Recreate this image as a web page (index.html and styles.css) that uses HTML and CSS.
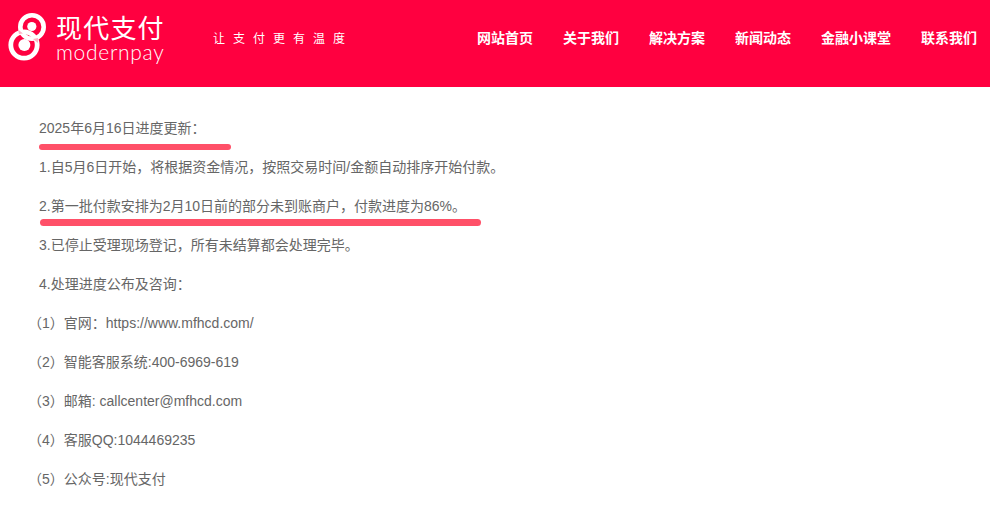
FILE: index.html
```html
<!DOCTYPE html>
<html lang="zh-CN">
<head>
<meta charset="utf-8">
<title>现代支付</title>
<link rel="stylesheet" href="styles.css">
</head>
<body>
<header class="header">
  <a class="logo" href="#">
    <svg class="logo-mark" width="48" height="56" viewBox="0 0 48 56" aria-hidden="true">
      <circle class="ring" cx="32" cy="18" r="11.7" stroke-width="4.6"/>
      <circle class="ring" cx="24" cy="36" r="13.2" stroke-width="4.8"/>
      <circle class="dot" cx="31.8" cy="17.5" r="4.6"/>
      <circle class="dot" cx="24.4" cy="36" r="6"/>
      <path class="ring-shade" d="M18 20.5 L23 24.5 L19 25 Z"/>
      <path class="ring-shade" d="M33 30 L38 29 L38 34 Z"/>
    </svg>
    <span class="logo-text">
      <span class="logo-cn">现代支付</span>
      <span class="logo-en">modernpay</span>
    </span>
  </a>
  <span class="tagline">让支付更有温度</span>
  <nav class="nav">
    <a href="#">网站首页</a>
    <a href="#">关于我们</a>
    <a href="#">解决方案</a>
    <a href="#">新闻动态</a>
    <a href="#">金融小课堂</a>
    <a href="#">联系我们</a>
  </nav>
</header>
<main class="content">
  <p class="line indented">2025年6月16日进度更新：<span class="bar bar-short"></span></p>
  <p class="line indented">1.自5月6日开始，将根据资金情况，按照交易时间/金额自动排序开始付款。</p>
  <p class="line indented">2.第一批付款安排为2月10日前的部分未到账商户，付款进度为86%。<span class="bar bar-long"></span></p>
  <p class="line indented">3.已停止受理现场登记，所有未结算都会处理完毕。</p>
  <p class="line indented">4.处理进度公布及咨询：</p>
  <p class="line">（1）官网：https://www.mfhcd.com/</p>
  <p class="line">（2）智能客服系统:400-6969-619</p>
  <p class="line">（3）邮箱: callcenter@mfhcd.com</p>
  <p class="line">（4）客服QQ:1044469235</p>
  <p class="line">（5）公众号:现代支付</p>
</main>
</body>
</html>
```
FILE: styles.css
```css
* { box-sizing: border-box; }
html, body { margin: 0; padding: 0; }
body {
  background: #fff;
  font-family: "Liberation Sans", "Noto Sans CJK SC", sans-serif;
  font-size: 14px;
  color: #666;
  overflow: hidden;
}
a { color: inherit; text-decoration: none; }

.header {
  display: flex;
  align-items: center;
  height: 87px;
  padding: 0 13px 13px 0;
  background: #ff0040;
  color: #fff;
}
.logo { display: flex; align-items: center; width: 213px; }
.logo-mark { flex: none; }
.ring { fill: none; stroke: #fff; }
.dot { fill: #fff; }
.ring-shade { fill: #ffb3c6; }
.logo-text { display: flex; flex-direction: column; margin: 3px 0 0 8px; }
.logo-cn {
  font-family: "Noto Sans CJK SC", sans-serif;
  font-weight: 400;
  font-size: 26px;
  line-height: 26px;
  letter-spacing: 1.2px;
  white-space: nowrap;
}
.logo-en {
  font-family: "Lato", sans-serif;
  font-weight: 300;
  font-size: 21px;
  line-height: 23px;
  letter-spacing: 0.7px;
  white-space: nowrap;
}
.tagline {
  font-family: "Noto Sans CJK SC", sans-serif;
  font-size: 12px;
  letter-spacing: 8px;
  white-space: nowrap;
}
.nav {
  display: flex;
  gap: 30px;
  margin-left: auto;
  font-family: "Noto Sans CJK SC", sans-serif;
  font-weight: 700;
  font-size: 14px;
  white-space: nowrap;
}

.content { padding: 22px 0 0 28px; }
.line {
  position: relative;
  margin: 0;
  height: 39px;
  line-height: 39px;
  white-space: nowrap;
}
.indented { padding-left: 11px; }
.bar {
  position: absolute;
  background: #ff5068;
  border-radius: 4px;
  height: 6px;
}
.bar-short { left: 11px; top: 35px; width: 192px; }
.bar-long { left: 12px; top: 32px; width: 441px; height: 7px; }
```
